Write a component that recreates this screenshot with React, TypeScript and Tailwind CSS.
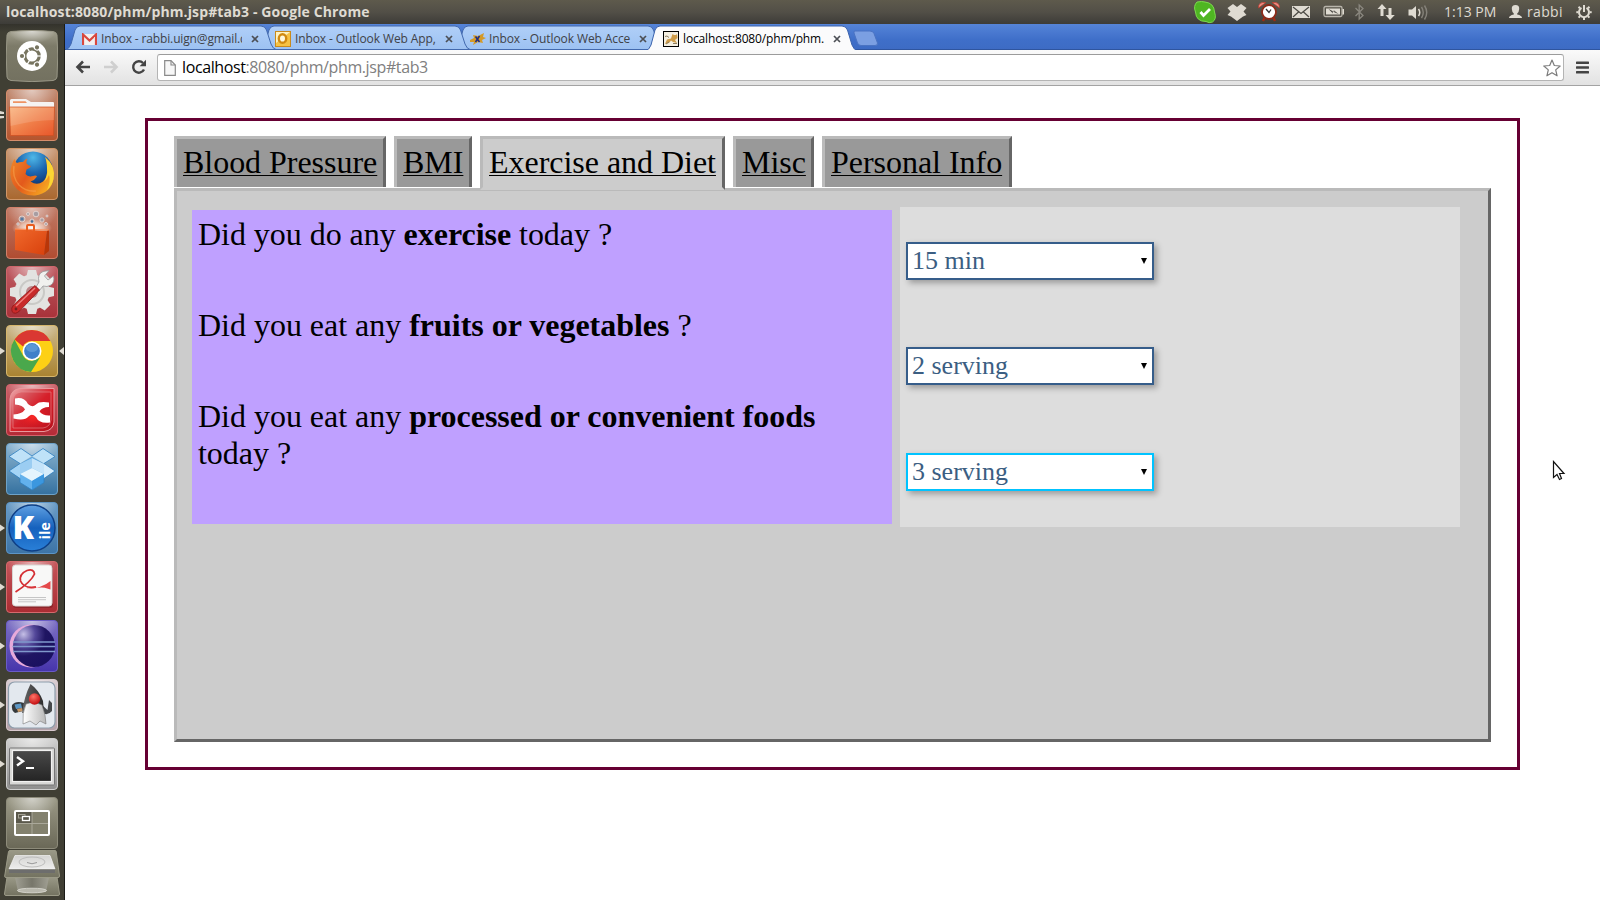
import type { ReactNode } from "react";

const UI = "font-['Open_Sans','Noto_Sans',sans-serif]";

/* ---------- Launcher ---------- */

function Tile({ id, top, bottom, stroke, children }: { id: string; top: string; bottom: string; stroke: string; children?: ReactNode }) {
  return (
    <svg width="52" height="52" viewBox="0 0 52 52" className="block shrink-0">
      <defs>
        <linearGradient id={`t-${id}`} x1="0" y1="0" x2="0" y2="1">
          <stop offset="0" stopColor={top} />
          <stop offset="1" stopColor={bottom} />
        </linearGradient>
        <radialGradient id={`g-${id}`} cx=".5" cy="0" r=".5">
          <stop offset="0" stopColor="#fff" stopOpacity=".55" />
          <stop offset="1" stopColor="#fff" stopOpacity="0" />
        </radialGradient>
      </defs>
      <rect x=".5" y=".5" width="51" height="51" rx="3.5" fill={`url(#t-${id})`} stroke={stroke} />
      <rect x="1" y="1" width="50" height="50" rx="3" fill={`url(#g-${id})`} />
      {children}
    </svg>
  );
}

const gear = (cx: number, cy: number, r: number) =>
  [0, 45, 90, 135, 180, 225, 270, 315].map((a) => (
    <path key={a} d={`M${cx - 4} ${cy - r}H${cx + 4}L${cx + 6} ${cy - r + 8}H${cx - 6}Z`} transform={`rotate(${a} ${cx} ${cy})`} />
  ));

function UbuntuIcon() {
  return (
    <svg width="52" height="52" viewBox="0 0 52 52" className="block shrink-0">
      <defs>
        <linearGradient id="ub" x1="0" y1="0" x2="0" y2="1">
          <stop offset="0" stopColor="#a3a08f" />
          <stop offset=".3" stopColor="#7d7b69" />
          <stop offset="1" stopColor="#737160" />
        </linearGradient>
        <radialGradient id="ubg" cx=".5" cy="0" r=".5">
          <stop offset="0" stopColor="#fff" stopOpacity=".6" />
          <stop offset="1" stopColor="#fff" stopOpacity="0" />
        </radialGradient>
      </defs>
      <path d="M5 1.5Q26-.8 47 1.5Q50.500 2 51 5Q52.500 26 51 47Q50.500 50 47 50.500Q26 52.800 5 50.500Q1.500 50 1 47Q-.5 26 1 5Q1.500 2 5 1.500Z" fill="url(#ub)" stroke="#999786" />
      <path d="M5 2Q26 0 47 2L50 8V26H2V8Z" fill="url(#ubg)" />
      <circle cx="26" cy="26" r="15" fill="#fff" />
      <circle cx="26" cy="26" r="7.200" fill="none" stroke="#77745f" strokeWidth="3.200" />
      {[60, 180, 300].map((a) => (
        <g key={a} transform={`rotate(${a} 26 26)`}>
          <circle cx="36" cy="26" r="3.200" fill="#fff" />
          <circle cx="36" cy="26" r="2.100" fill="#77745f" />
        </g>
      ))}
      {[0, 120, 240].map((a) => (
        <path key={a} d="M31 26H36" stroke="#fff" strokeWidth="1.200" transform={`rotate(${a} 26 26)`} />
      ))}
    </svg>
  );
}

function FilesIcon() {
  return (
    <Tile id="files" top="#c08a72" bottom="#b5542d" stroke="#d58d6b">
      <defs>
        <linearGradient id="fold" x1="0" y1="0" x2="1" y2="1">
          <stop offset="0" stopColor="#f9b27c" />
          <stop offset=".5" stopColor="#f0804a" />
          <stop offset="1" stopColor="#e8562a" />
        </linearGradient>
      </defs>
      <path d="M4 11.500Q4 10 5.500 10H20L25 13H47Q48 13 48 14V20H4Z" fill="#f5f3f2" />
      <path d="M7 12.200H19.500L21 14H7Z" fill="#ee9363" />
      <path d="M3.500 18H48.500L47.500 46.500H4.500Z" fill="url(#fold)" stroke="#cf4f20" strokeWidth=".7" />
      <path d="M4 18.600H48V31Q28 31 4.500 37Z" fill="#fff" fillOpacity=".14" />
    </Tile>
  );
}

function FirefoxIcon() {
  return (
    <Tile id="ff" top="#c99a78" bottom="#a9682f" stroke="#cf9668">
      <defs>
        <radialGradient id="ffb" cx=".5" cy=".15" r=".75">
          <stop offset="0" stopColor="#4fb8e8" />
          <stop offset=".5" stopColor="#1c66b0" />
          <stop offset="1" stopColor="#0c2f6c" />
        </radialGradient>
        <linearGradient id="ffo" x1="0" y1="0" x2="1" y2=".6">
          <stop offset="0" stopColor="#f08a2a" />
          <stop offset=".5" stopColor="#e3591c" />
          <stop offset="1" stopColor="#f6a821" />
        </linearGradient>
      </defs>
      <circle cx="27" cy="23.500" r="20" fill="url(#ffb)" />
      <path d="M39 9Q50 18 47.500 31Q45 45 29 47.500Q14 48 7 36Q2 26 6 16Q7 13 8.500 11Q9.500 14 11 15Q14 13.500 17 14Q19 11 21.500 10.500Q20 13 20.500 15.500Q22 17.500 25 18Q24 20 20.500 21.500Q20 24 19.500 26Q22 29.500 27 28Q30 27 31 28.500Q29 32 24.500 33.500Q31 38 37 33.500Q42 29 41 20Q41 13 39 9Z" fill="url(#ffo)" />
      <path d="M39 9Q50 18 47.500 31Q46 38 41 42Q45 33 43 27Q41 32 38 34Q42 27 41 20Q41 13 39 9Z" fill="#fbd534" />
      <path d="M8 18Q6 29 13 37Q20 44 30 43" fill="none" stroke="#f7a04a" strokeWidth="1.500" opacity=".6" />
    </Tile>
  );
}

function SoftwareIcon() {
  return (
    <Tile id="sc" top="#c07a66" bottom="#b04c31" stroke="#d0806a">
      <defs>
        <linearGradient id="bag" x1="0" y1="0" x2="1" y2="1">
          <stop offset="0" stopColor="#f0692c" />
          <stop offset="1" stopColor="#d8400c" />
        </linearGradient>
        <radialGradient id="glow">
          <stop offset="0" stopColor="#fff" stopOpacity="1" />
          <stop offset=".6" stopColor="#ffe6d6" stopOpacity=".6" />
          <stop offset="1" stopColor="#ffd9c0" stopOpacity="0" />
        </radialGradient>
      </defs>
      <ellipse cx="26" cy="21" rx="20" ry="9" fill="url(#glow)" />
      {[[16, 12, 3], [30, 7, 2.800], [22, 7, 1.500], [36, 13, 2.100], [26, 14, 2], [40, 17, 1.500], [12, 17, 1.200], [41, 9, 1]].map(([x, y, r]) => (
        <circle key={`${x}-${y}`} cx={x} cy={y} r={r} fill="#a89da2" stroke="#e9dcd8" strokeWidth=".8" />
      ))}
      <circle cx="16" cy="12" r="1.600" fill="#537aa3" />
      <circle cx="26" cy="14.500" r="1.200" fill="#446f9b" />
      <path d="M9 22L41 24L38 48L9 43Z" fill="url(#bag)" />
      <path d="M41 24L43 22.500V44L38 48Z" fill="#b93608" />
      <path d="M9 22L43 23" stroke="#ff925c" />
      <path d="M21 25V19Q21 18 22 18H27Q28 18 28 19V25" fill="none" stroke="#e85d1f" strokeWidth="2" />
    </Tile>
  );
}

function SettingsIcon() {
  return (
    <Tile id="set" top="#bf5c63" bottom="#a8323a" stroke="#cd666b">
      <g fill="#e3e3e1">
        {gear(26, 26, 22)}
        <circle cx="26" cy="26" r="17.500" />
      </g>
      <circle cx="26" cy="26" r="12" fill="none" stroke="#c9c9c6" strokeWidth="2" />
      <circle cx="26" cy="26" r="6" fill="#bb8588" />
      <path d="M30 21L33 16Q31 8 37 5.500L43 4.500L38.500 10L42 14L47.500 10Q49 16 45 19Q41 21.500 37 20L33 25Z" fill="#f1f1ef" stroke="#98989a" strokeWidth=".8" />
      <path d="M29 19.500L33.500 24L14 44.500Q9 49.500 6 45.500Q4.500 42 8 38.500Z" fill="#c92a2a" stroke="#8c1717" strokeWidth=".8" />
      <path d="M29 22L10 40" stroke="#ef7d7a" strokeWidth="1.500" />
      <circle cx="10" cy="43" r="1.400" fill="#742020" />
    </Tile>
  );
}

function ChromeIcon() {
  return (
    <Tile id="chr" top="#cbb78b" bottom="#a98331" stroke="#d6b66c">
      <circle cx="26" cy="26" r="21" fill="#fdd015" />
      <path d="M26 5A21 21 0 0 1 44.400 16H26A10 10 0 0 0 17 21.500L8.500 14.500A21 21 0 0 1 26 5Z" fill="#da3832" />
      <path d="M8.500 14.500A21 21 0 0 0 25 47L34 32.500L26 36Q19 35.500 16.500 29.500Z" fill="#4aa84c" />
      <circle cx="26" cy="26" r="9.500" fill="#fff" />
      <circle cx="26" cy="26" r="7.900" fill="#3f80c9" />
      <ellipse cx="26" cy="23" rx="6" ry="4" fill="#6ea6dd" opacity=".6" />
    </Tile>
  );
}

function XmindIcon() {
  return (
    <Tile id="xm" top="#c9636a" bottom="#b52a36" stroke="#d3636c">
      <defs>
        <linearGradient id="xr" x1="0" y1="0" x2="1" y2="1">
          <stop offset="0" stopColor="#f0a9ac" />
          <stop offset=".3" stopColor="#d95c63" />
          <stop offset=".5" stopColor="#d8232c" />
          <stop offset="1" stopColor="#b50f1a" />
        </linearGradient>
        <radialGradient id="xc">
          <stop offset="0" stopColor="#ff2a26" stopOpacity=".9" />
          <stop offset="1" stopColor="#e01820" stopOpacity="0" />
        </radialGradient>
      </defs>
      <path d="M14 4.500H48V38Q47 46.500 38 47.500H4V15Q5 5.500 14 4.500Z" fill="url(#xr)" stroke="#e9999d" strokeWidth="1" />
      <path d="M15 8H45V36Q44 43 37 44H7V16Q8 9 15 8Z" fill="#d01822" fillOpacity=".25" stroke="#e58e92" strokeWidth=".6" />
      <ellipse cx="27" cy="33" rx="17" ry="11" fill="url(#xc)" />
      <path d="M9 14.500Q18 12.500 22 20Q26 24 30 20.500Q33 17 43 18.500V23Q36 23 33.500 27.500Q37 32 44 31.500V38.500Q33 40 30 33Q26 29 22.500 32.500Q19 37 7.500 34.500V30.500Q16 30 19 25.500Q17 21 9 20.500Z" fill="#fff" />
    </Tile>
  );
}

function DropboxIcon() {
  return (
    <Tile id="db" top="#8db6d2" bottom="#35719f" stroke="#6da2c8">
      <path d="M15 5.500L26 13L14 20.500L3 13.500Z" fill="#bfe2f8" />
      <path d="M37 5.500L49 13.500L38 20.500L26 13Z" fill="#bfe2f8" />
      <path d="M14 20.500L26 29L15 36L3 28Z" fill="#a5d4f5" />
      <path d="M38 20.500L49 28L37 36L26 29Z" fill="#d5ecfb" />
      <path d="M26 14L38 21L26 29L14 21Z" fill="#4da2e3" />
      <path d="M26 15V29L14 36V21Z" fill="#9bcdf2" />
      <path d="M26 15L38 21V36L26 29Z" fill="#c5e4fa" />
      <path d="M14 31L26 25L38 31V39.500L26 47L14 39.500Z" fill="#63b1ec" />
      <path d="M26 25L38 31L26 38L14 31Z" fill="#e5f4fd" />
      <path d="M26 38L38 31V39.500L26 47Z" fill="#3b97df" />
      <path d="M15 5.500L3 13.500L14 20.500L3 28L14 35.500V39.500L26 47L38 39.500V35.500L49 28L38 20.500L49 13.500L37 5.500L26 13Z" fill="none" stroke="#2e7fc0" strokeWidth=".8" />
    </Tile>
  );
}

function KileIcon() {
  return (
    <Tile id="kile" top="#6a9cc6" bottom="#3d74a6" stroke="#5d95c6">
      <defs>
        <linearGradient id="kg" x1="0" y1="0" x2="0" y2="1">
          <stop offset="0" stopColor="#5fa0e2" />
          <stop offset=".5" stopColor="#1561bd" />
          <stop offset="1" stopColor="#2a80d8" />
        </linearGradient>
      </defs>
      <circle cx="26" cy="26" r="23" fill="url(#kg)" stroke="#0e3f86" strokeWidth="1.500" />
      <text x="6.500" y="37" fontFamily="Open Sans" fontWeight="800" fontSize="31.500" fill="#fff">K</text>
      <text transform="translate(44 37.500) rotate(-90)" fontFamily="Open Sans" fontWeight="700" fontSize="14.500" fill="#fff">ile</text>
    </Tile>
  );
}

function DocumentIcon() {
  return (
    <Tile id="doc" top="#c5555a" bottom="#a92c32" stroke="#d46a6d">
      <rect x="7" y="5" width="40" height="42" rx="3" fill="#701c1f" opacity=".5" />
      <rect x="6.500" y="4" width="39.500" height="41" rx="3" fill="#f8f8f7" stroke="#d8d6d4" />
      <path d="M9.500 31Q25 21 28.500 13Q28 7.500 21 9.500Q13 13 14.500 20Q18 28 30 26" fill="none" stroke="#d42f33" strokeWidth="1.800" />
      <path d="M20 28Q36 27.500 44.500 20V28.500Q34 24.500 20 28Z" fill="#e4494a" />
      <path d="M12 36.500H40M12 38.700H40M12 40.800H30" stroke="#c5c5c5" />
    </Tile>
  );
}

function EclipseIcon() {
  return (
    <Tile id="ecl" top="#7e72c4" bottom="#4634ab" stroke="#6a5cc6">
      <defs>
        <radialGradient id="eg" cx=".25" cy=".22" r=".8">
          <stop offset="0" stopColor="#c5bfe6" />
          <stop offset=".35" stopColor="#54489a" />
          <stop offset=".65" stopColor="#1f1562" />
          <stop offset="1" stopColor="#1a1160" />
        </radialGradient>
      </defs>
      <circle cx="25" cy="26" r="21.500" fill="#e6a9da" />
      <circle cx="28" cy="26" r="21" fill="url(#eg)" />
      <path d="M7 22H49M6.500 26.500H49M7 31.500H49" stroke="#7f98cc" strokeWidth="1.400" />
    </Tile>
  );
}

function JavaIcon() {
  return (
    <Tile id="java" top="#d8ccd0" bottom="#b3a1a8" stroke="#d9c9ce">
      <defs>
        <radialGradient id="jr" cx=".4" cy=".3" r=".7">
          <stop offset="0" stopColor="#ff7468" />
          <stop offset="1" stopColor="#c30d10" />
        </radialGradient>
        <linearGradient id="jb" x1="0" y1="0" x2="1" y2="0">
          <stop offset="0" stopColor="#fff" />
          <stop offset="1" stopColor="#b9b9b9" />
        </linearGradient>
        <linearGradient id="jh" x1="0" y1="0" x2="1" y2="0">
          <stop offset="0" stopColor="#666" />
          <stop offset="1" stopColor="#2c2c2c" />
        </linearGradient>
      </defs>
      <rect x="2.500" y="3" width="46.500" height="46" rx="6" fill="#e3e8ee" stroke="#8d9dac" strokeWidth="1.200" />
      <path d="M6 26Q10 21 18 24L21 31L9 34Q5 31 6 26Z" fill="#35393c" />
      <path d="M8.500 25.500L15 24.500L16 29L10 30Z" fill="#5c96c4" />
      <path d="M11 30L16 29L17 32L12 33Z" fill="#c79765" />
      <path d="M36 26L41.500 31L43 21L46 24V32Q42 37 36 34Z" fill="#45484b" />
      <path d="M24.500 5Q33 11 37 22L38 34L16 34Q18 18 24.500 5Z" fill="url(#jh)" />
      <path d="M20 25Q28 22 36 26Q40 37 40 45L34 42L30 46L24 42L17 45Q16 34 20 25Z" fill="url(#jb)" stroke="#777" strokeWidth=".6" />
      <circle cx="28.500" cy="20" r="5.700" fill="url(#jr)" />
    </Tile>
  );
}

function TerminalIcon() {
  return (
    <Tile id="term" top="#cfcfce" bottom="#8f8f8e" stroke="#cfcfce">
      <defs>
        <linearGradient id="tg" x1="0" y1="0" x2="0" y2="1">
          <stop offset="0" stopColor="#4a4a4a" />
          <stop offset="1" stopColor="#242424" />
        </linearGradient>
      </defs>
      <rect x="3.500" y="10" width="45" height="37" rx="1" fill="#d7d7d5" stroke="#757575" />
      <rect x="6.500" y="12.500" width="39" height="31" fill="url(#tg)" stroke="#f1f1f0" strokeWidth="1.200" />
      <path d="M11 19L17 23.200L11 27.400" fill="none" stroke="#fff" strokeWidth="2.400" />
      <path d="M20 30H28" stroke="#fff" strokeWidth="2" />
    </Tile>
  );
}

function WorkspaceIcon() {
  return (
    <Tile id="ws" top="#9c9a87" bottom="#6a6857" stroke="#8d8b7a">
      <rect x="9" y="14" width="34" height="24" fill="#83816e" />
      <rect x="9" y="14" width="17" height="12" fill="#5b594c" />
      <path d="M26 15V37M10 26.500H42" stroke="#aaa89a" />
      <rect x="9" y="14" width="34" height="24" rx="1" fill="none" stroke="#fff" strokeWidth="2" />
      <rect x="12.500" y="17.500" width="6.500" height="3.500" fill="none" stroke="#a6a496" />
      <rect x="16.500" y="19.500" width="7" height="4" fill="#5b594c" stroke="#fff" strokeWidth="1.300" />
    </Tile>
  );
}

function StackedIcons() {
  return (
    <svg width="58" height="46" viewBox="3 850 58 46" className="-mt-1.5 -ml-[3px] block shrink-0">
      <defs>
        <linearGradient id="sk" x1="0" y1="0" x2="0" y2="1">
          <stop offset="0" stopColor="#9a9987" />
          <stop offset="1" stopColor="#737260" />
        </linearGradient>
        <linearGradient id="can" x1="0" y1="0" x2="1" y2="0">
          <stop offset="0" stopColor="#a09f93" />
          <stop offset=".5" stopColor="#77766a" />
          <stop offset="1" stopColor="#a09f93" />
        </linearGradient>
        <linearGradient id="disk" x1="0" y1="0" x2="0" y2="1">
          <stop offset="0" stopColor="#d5d5d3" />
          <stop offset="1" stopColor="#ededec" />
        </linearGradient>
      </defs>
      <path d="M7 877H57L59.500 894Q59.500 895.500 58 895.500H6Q4.500 895.500 4.500 894Z" fill="url(#sk)" stroke="#9b9a87" />
      <path d="M15 877H49L46 892H18Z" fill="url(#can)" />
      <ellipse cx="32" cy="890.500" rx="14.500" ry="2.300" fill="#b9b8ad" stroke="#dddcd4" strokeWidth=".8" />
      <path d="M10 850.500H55Q56 850.500 56.200 851.500L59.500 876Q59.500 877.500 58 877.500H6Q4.500 877.500 4.700 876L8.500 851.500Q8.800 850.500 10 850.500Z" fill="url(#sk)" stroke="#9b9a87" />
      <path d="M15 855.500H50L55 869H9Z" fill="url(#disk)" stroke="#f6f6f6" strokeWidth=".7" />
      <path d="M9 869.500H55V873H9Z" fill="#6d6d6d" />
      <ellipse cx="32" cy="862" rx="13" ry="5" fill="none" stroke="#bebebd" />
      <path d="M27 862.500Q32 865 37 862.500" fill="none" stroke="#999" />
    </svg>
  );
}

type Marks = "none" | "one" | "two" | "focused";
const launcher: { key: string; icon: ReactNode; marks: Marks }[] = [
  { key: "dash", icon: <UbuntuIcon />, marks: "none" },
  { key: "files", icon: <FilesIcon />, marks: "two" },
  { key: "firefox", icon: <FirefoxIcon />, marks: "none" },
  { key: "software", icon: <SoftwareIcon />, marks: "none" },
  { key: "settings", icon: <SettingsIcon />, marks: "none" },
  { key: "chrome", icon: <ChromeIcon />, marks: "focused" },
  { key: "xmind", icon: <XmindIcon />, marks: "none" },
  { key: "dropbox", icon: <DropboxIcon />, marks: "none" },
  { key: "kile", icon: <KileIcon />, marks: "one" },
  { key: "document", icon: <DocumentIcon />, marks: "one" },
  { key: "eclipse", icon: <EclipseIcon />, marks: "one" },
  { key: "java", icon: <JavaIcon />, marks: "one" },
  { key: "terminal", icon: <TerminalIcon />, marks: "one" },
  { key: "workspace", icon: <WorkspaceIcon />, marks: "none" },
  { key: "stack", icon: <StackedIcons />, marks: "none" },
];

function Launcher() {
  return (
    <nav className="flex w-[65px] shrink-0 flex-col gap-[7px] overflow-hidden border-r border-[#1b1b17] bg-[#403f34] bg-linear-to-b from-[#34332c] to-[#403f34] to-[8px] pt-[6px]">
      {launcher.map(({ key, icon, marks }) => (
        <div key={key} className="flex shrink-0 items-center">
          <svg width="6" height="12" viewBox="0 0 6 12" className="block shrink-0" fill="#dfdbd2">
            {(marks === "one" || marks === "focused") && <path d="M0 2.500L5 6L0 9.500Z" />}
            {marks === "two" && <path d="M0 2L4 3V5H0ZM0 7H4V9L0 9.500Z" />}
          </svg>
          {icon}
          <svg width="6" height="12" viewBox="0 0 6 12" className="block shrink-0" fill="#dfdbd2">
            {marks === "focused" && <path d="M6 2L1 6L6 10Z" />}
          </svg>
        </div>
      ))}
    </nav>
  );
}

/* ---------- Top panel ---------- */

function Glyph({ x, w, className, children }: { x: number; w: number; className?: string; children: ReactNode }) {
  return (
    <svg width={w} height="24" viewBox={`${x} 0 ${w} 24`} className={`block shrink-0 ${className ?? ""}`} fill="#dfdbd2">
      {children}
    </svg>
  );
}

function TopPanel() {
  return (
    <header className={`flex h-6 shrink-0 items-center bg-linear-to-b from-[#5e5a4c] via-[#524f47] to-[#3d3c38] pr-2 pl-1.5 text-[#dfdbd2] ${UI}`}>
      <span className="w-[390px] text-[14px] leading-6 font-bold tracking-[0.12px] whitespace-nowrap">localhost:8080/phm/phm.jsp#tab3 - Google Chrome</span>
      <div className="ml-auto flex items-center">
        <Glyph x={1194} w={22}>
          <path d="M1197 2Q1202 1 1205 2Q1214 3 1214.500 12Q1217 19 1212.500 22Q1209 23.500 1206 21.500Q1196 21.500 1195.500 12Q1193 6 1197 2Z" fill="#4fb622" stroke="#7ddb4f" />
          <path d="M1200.500 12L1203.500 15.500L1210 9" fill="none" stroke="#fff" strokeWidth="2.800" />
        </Glyph>
        <Glyph x={1227} w={20} className="ml-[11px]">
          <path d="M1233 4L1237 7L1241 4L1246.500 8L1243.500 11.500L1246.500 15L1243 16.500L1237 21L1231 16.500L1227.500 15L1230.500 11.500L1227.500 8Z" />
        </Glyph>
        <Glyph x={1258} w={22} className="ml-[11px]">
          <path d="M1258.500 8Q1258 1.500 1266 2.500ZM1279.500 8Q1280 1.500 1272 2.500Z" fill="#ef8b80" stroke="#b33a2c" strokeWidth=".7" />
          <path d="M1263 21L1265 17M1275 21L1273 17" stroke="#a02b14" strokeWidth="2.500" />
          <circle cx="1269" cy="12" r="7" fill="#fff" stroke="#8c2a18" strokeWidth="1.800" />
          <path d="M1266 9L1269 12.500L1271 9.500" fill="none" stroke="#333" strokeWidth="1.300" />
        </Glyph>
        <Glyph x={1292} w={18} className="ml-[12px]">
          <rect x="1292" y="6" width="18" height="12" />
          <path d="M1293 7L1301 13.500L1309 7M1293 17L1298.500 12M1309 17L1303.500 12" fill="none" stroke="#4b4943" strokeWidth="1.200" />
        </Glyph>
        <Glyph x={1323} w={21} className="ml-[13px]">
          <rect x="1324" y="6.500" width="18" height="10" rx="1.500" fill="none" stroke="#b9b5ab" strokeWidth="1.300" />
          <path d="M1342.500 9H1344V14.500H1342.500Z" />
          <rect x="1326" y="8.500" width="14" height="6" />
          <path d="M1328.500 9L1334.500 12L1333.500 10L1338.500 14L1332.500 11.500L1333 13.500Z" fill="#45433e" />
        </Glyph>
        <Glyph x={1355} w={9} className="ml-[11px]">
          <path d="M1355.500 8L1363 15.500L1359.200 19V5L1363 8.500L1355.500 16" fill="none" stroke="#8a877f" strokeWidth="1.300" />
        </Glyph>
        <Glyph x={1377} w={18} className="ml-[13px]">
          <path d="M1382 4L1386.500 9H1383.500V16H1380.500V9H1377.500ZM1390 20L1394.800 15H1391.500V8H1388.500V15H1385.500Z" />
        </Glyph>
        <Glyph x={1408} w={21} className="ml-[13px]">
          <path d="M1408.500 9.500H1412L1416 6V19L1412 15.500H1408.500Z" />
          <path d="M1418.500 9Q1421 12.500 1418.500 16" fill="none" stroke="#dfdbd2" strokeWidth="1.500" />
          <path d="M1421.500 7Q1425 12.500 1421.500 18M1424.500 5.500Q1429 12.500 1424.500 19.500" fill="none" stroke="#85827a" strokeWidth="1.400" />
        </Glyph>
        <span className="ml-[15px] w-[52px] text-[14px] leading-6 whitespace-nowrap">1:13 PM</span>
        <Glyph x={1509} w={13} className="ml-[13px]">
          <path d="M1515.500 5Q1519.500 5 1519.200 9Q1519 12 1517.200 13.500V14.500Q1522 15.500 1522 18H1509Q1509 15.500 1513.800 14.500V13.500Q1512 12 1511.800 9Q1511.500 5 1515.500 5Z" />
        </Glyph>
        <span className="ml-[5px] w-[36px] text-[14px] leading-6 tracking-[0.35px] whitespace-nowrap">rabbi</span>
        <Glyph x={1576} w={16} className="ml-[13px]">
          <g stroke="#dfdbd2" strokeWidth="2" fill="none">
            <path d="M1581.500 7.800A5 5 0 1 0 1586.500 7.800" />
            <path d="M1584 5V12" />
            {[45, 90, 135, 180, 225, 270, 315].map((a) => (
              <path key={a} d="M1584 4.500V6.500" transform={`rotate(${a} 1584 12.200)`} />
            ))}
          </g>
        </Glyph>
      </div>
    </header>
  );
}

/* ---------- Browser chrome ---------- */

function CloseGlyph({ className }: { className: string }) {
  return (
    <svg width="8" height="8" viewBox="0 0 8 8" className={`block shrink-0 ${className}`}>
      <path d="M1 1L7 7M7 1L1 7" stroke="#4c4f55" strokeWidth="1.700" />
    </svg>
  );
}

function TabStrip() {
  return (
    <div className={`relative flex h-[26px] shrink-0 text-[12px] text-[#3f4247] ${UI}`}>
      <svg width="1535" height="26" viewBox="65 24 1535 26" className="absolute inset-0 block">
        <defs>
          <linearGradient id="strip" x1="0" y1="0" x2="0" y2="1">
            <stop offset="0" stopColor="#5584d8" />
            <stop offset=".6" stopColor="#3f6fc9" />
            <stop offset="1" stopColor="#3d6bc4" />
          </linearGradient>
          <linearGradient id="tabbg" x1="0" y1="0" x2="0" y2="1">
            <stop offset="0" stopColor="#b0cff8" />
            <stop offset="1" stopColor="#9dc2f2" />
          </linearGradient>
        </defs>
        <rect x="65" y="24" width="1535" height="26" fill="url(#strip)" />
        <path d="M65 49.500H1600" stroke="#2f559f" />
        <g fill="url(#tabbg)" stroke="#4269ae">
          <path d="M454 49.500Q457 49 459 44L463 30Q464.500 26 468 26H648Q652 26 653.500 30L658 44Q660 49 663 49.500Z" />
          <path d="M260 49.500Q263 49 265 44L269 30Q270.500 26 274 26H455Q459 26 460.500 30L465 44Q467 49 470 49.500Z" />
          <path d="M66 49.500Q69 49 71 44L75 30Q76.500 26 80 26H261Q265 26 266.500 30L271 44Q273 49 276 49.500Z" />
        </g>
        <path d="M646 50.500Q649 50 651 45L655 30Q656.500 26 660 26H842Q846 26 847.500 30L852 45Q854 50 857 50.500Z" fill="#fbfbfc" stroke="#3a62ad" />
        <path d="M855 31H870Q873 31 874 33.500L877.500 43Q878 45.500 875 45.500H861Q858.500 45.500 857.500 43L854 33Q853.500 31 855 31Z" fill="#7b9fe2" stroke="#4a73c2" />
      </svg>
      <div className="relative mt-[4px] flex h-[22px] items-center">
        <svg width="15" height="12" viewBox="0 0 15 12" className="ml-[17px] block">
          <path d="M0 1H15V12H0Z" fill="#f2f0ef" />
          <path d="M1 12V1.500L7.500 7.500L14 1.500V12" fill="none" stroke="#d8483f" strokeWidth="2.200" />
        </svg>
        <span className="ml-1 w-[141px] overflow-hidden leading-[22px] tracking-[-0.14px] whitespace-nowrap">Inbox - rabbi.uign@gmail.c</span>
        <CloseGlyph className="ml-[9px]" />
        <svg width="16" height="16" viewBox="0 0 16 16" className="ml-[16px] block">
          <rect x=".5" y=".5" width="15" height="15" fill="#f6c244" stroke="#c98a1c" />
          <path d="M1 1H15L1 12Z" fill="#fff2bf" />
          <ellipse cx="7.500" cy="7.500" rx="3.700" ry="4.300" fill="#fff8dc" stroke="#d08a12" strokeWidth="2.400" />
        </svg>
        <span className="ml-1 w-[142px] leading-[22px] tracking-[-0.1px] whitespace-nowrap">Inbox - Outlook Web App,</span>
        <CloseGlyph className="ml-[8px]" />
        <svg width="16" height="12" viewBox="0 0 16 12" className="ml-[17px] block">
          <path d="M0 7L4 5L3 2L8 3L14 0L13 4L16 5L12 7L13 10L8 9L3 12L4 9L0 9Z" fill="#d49a28" />
          <path d="M5.500 3.500L9.500 9M9.500 3L5.500 9" stroke="#1c2c86" strokeWidth="1.500" />
        </svg>
        <span className="ml-[3px] w-[142px] leading-[22px] tracking-[-0.1px] whitespace-nowrap">Inbox - Outlook Web Acce</span>
        <CloseGlyph className="ml-[8px]" />
        <svg width="16" height="16" viewBox="0 0 16 16" className="ml-[16px] block">
          <rect x=".5" y=".5" width="15" height="15" fill="#f4efe2" stroke="#000" />
          <path d="M2 13L4 8.500L8 7.500L9.500 3L11 4H13L14 3L14.500 7L12 9L14 12L10 11L8 9.500L6 12Z" fill="#cf9c4a" />
          <path d="M2 5.500Q4 4 6 6.500M3 13L6 11M10 12.500H14" fill="none" stroke="#8b7d62" strokeWidth="1" />
        </svg>
        <span className="ml-1 w-[142px] leading-[22px] tracking-[-0.15px] whitespace-nowrap text-black">localhost:8080/phm/phm.</span>
        <CloseGlyph className="ml-[8px]" />
      </div>
    </div>
  );
}

function Toolbar() {
  return (
    <div className="flex h-9 shrink-0 items-center border-b border-[#a3a3a3] bg-linear-to-b from-[#fafafa] to-[#e2e2e2]">
      <svg width="16" height="14" viewBox="0 0 16 14" className="mb-px ml-[10px] block">
        <path d="M15 7H3M8 1.500L2.500 7L8 12.500" fill="none" stroke="#444" strokeWidth="2.600" />
      </svg>
      <svg width="16" height="14" viewBox="0 0 16 14" className="mb-px ml-[12px] block">
        <path d="M1 7H13M8 1.500L13.500 7L8 12.500" fill="none" stroke="#cfcfcf" strokeWidth="2.600" />
      </svg>
      <svg width="16" height="16" viewBox="0 0 16 16" className="mb-px ml-[12px] block">
        <path d="M13 10.500A5.700 5.700 0 1 1 12 4" fill="none" stroke="#444" strokeWidth="2.400" />
        <path d="M15 .8V7.200H8.600Z" fill="#444" />
      </svg>
      <div className="mr-9 ml-[10px] flex h-[27px] flex-1 items-center rounded-[3px] border border-[#b4b4b4] border-t-[#9b9b9b] bg-white">
        <svg width="12" height="16" viewBox="0 0 12 16" className="ml-[6px] block">
          <path d="M.7 .7H7L11.300 5V15.300H.7Z" fill="#f7f7f7" stroke="#8a8a8a" strokeWidth="1.200" />
          <path d="M7 .7V5H11.300" fill="none" stroke="#8a8a8a" strokeWidth="1.100" />
        </svg>
        <span className={`mb-[2px] ml-[6px] text-[16px] leading-6 tracking-[-0.39px] whitespace-nowrap text-[#808080] ${UI}`}>
          <span className="text-black">localhost</span>:8080/phm/phm.jsp#tab3
        </span>
        <svg width="18" height="18" viewBox="0 0 18 18" className="mr-[2px] ml-auto block">
          <path d="M9 1L11.300 6.500L17.200 7L12.700 10.900L14.100 16.800L9 13.700L3.900 16.800L5.300 10.900L.8 7L6.700 6.500Z" fill="#fff" stroke="#7c7c7c" strokeWidth="1.200" strokeLinejoin="round" />
        </svg>
      </div>
      <svg width="13" height="13" viewBox="0 0 13 13" className="-ml-6 mr-[11px] block">
        <path d="M1 1.700H12M1 6.500H12M1 11.300H12" stroke="#444" strokeWidth="2.600" strokeLinecap="round" />
      </svg>
    </div>
  );
}

/* ---------- Page ---------- */

function PageTab({ className, children }: { className: string; children: ReactNode }) {
  return (
    <div className={`box-border border-t-[3px] border-r-[3px] border-l-[3px] border-t-[#bababa] border-r-[#666] border-l-[#bababa] pl-[6px] pt-[5px] leading-[37px] tracking-[-0.03px] whitespace-nowrap text-black underline decoration-1 underline-offset-[2px] ${className}`}>
      {children}
    </div>
  );
}

function Select({ value, border, className }: { value: string; border: string; className: string }) {
  return (
    <div className={`flex h-[38px] w-[248px] items-center border-2 bg-white pl-[4px] text-[26px] leading-[34px] text-[#3b5e82] shadow-[3px_3px_6px_rgba(0,0,0,0.3)] ${border} ${className}`}>
      {value}
      <svg width="6" height="6" viewBox="0 0 6 6" className="mr-[5px] ml-auto block">
        <path d="M0 0H6L3 6Z" fill="#000" />
      </svg>
    </div>
  );
}

function Page() {
  return (
    <main className="relative flex-1 bg-white pt-8 pl-20 font-['Liberation_Serif',serif] text-[32px] text-black">
      <div className="h-[652px] w-[1375px] border-[3px] border-[#660033] pt-[15px] pl-[26px]">
        <div className="relative flex h-[52px] items-start gap-2">
          <PageTab className="h-[51px] w-[212px] bg-[#999]">Blood Pressure</PageTab>
          <PageTab className="h-[51px] w-[78px] bg-[#999]">BMI</PageTab>
          <PageTab className="h-[54px] w-[245px] border-b-[3px] border-b-[#ccc] bg-[#ccc]">Exercise and Diet</PageTab>
          <PageTab className="h-[51px] w-[81px] bg-[#999]">Misc</PageTab>
          <PageTab className="h-[51px] w-[190px] bg-[#999]">Personal Info</PageTab>
        </div>
        <section className="flex h-[554px] w-[1317px] items-start border-[3px] border-t-[#bababa] border-r-[#666] border-b-[#666] border-l-[#bababa] bg-[#ccc] pt-4 pl-[15px]">
          <div className="mt-[3px] h-[314px] w-[700px] bg-[#bfa0ff] pt-[6px] pl-[6px] leading-[37px] tracking-[-0.02px]">
            <p className="tracking-[-0.04px]">Did you do any <b>exercise</b> today ?</p>
            <p className="mt-[54px]">Did you eat any <b>fruits or vegetables</b> ?</p>
            <p className="mt-[54px]">Did you eat any <b>processed or convenient foods</b><br />today ?</p>
          </div>
          <div className="ml-2 h-[320px] w-[560px] bg-[#ddd] pt-[35px] pl-[6px]">
            <Select value="15 min" border="border-[#365d8a]" className="" />
            <Select value="2 serving" border="border-[#365d8a]" className="mt-[67px]" />
            <Select value="3 serving" border="border-[#00c3ff]" className="mt-[68px]" />
          </div>
        </section>
      </div>
      <svg width="14" height="22" viewBox="0 0 14 22" className="absolute top-[374px] left-[1487px] block">
        <path d="M1.500 1.500V17.500L5 14.500L7.500 19.500L9.500 18.500L7.500 13.500H12Z" fill="#fff" stroke="#111" strokeWidth="1.200" />
      </svg>
    </main>
  );
}

export default function App() {
  return (
    <div className="flex h-[900px] w-[1600px] flex-col overflow-hidden bg-white">
      <TopPanel />
      <div className="flex min-h-0 flex-1">
        <Launcher />
        <div className="flex min-w-0 flex-1 flex-col">
          <TabStrip />
          <Toolbar />
          <Page />
        </div>
      </div>
    </div>
  );
}
